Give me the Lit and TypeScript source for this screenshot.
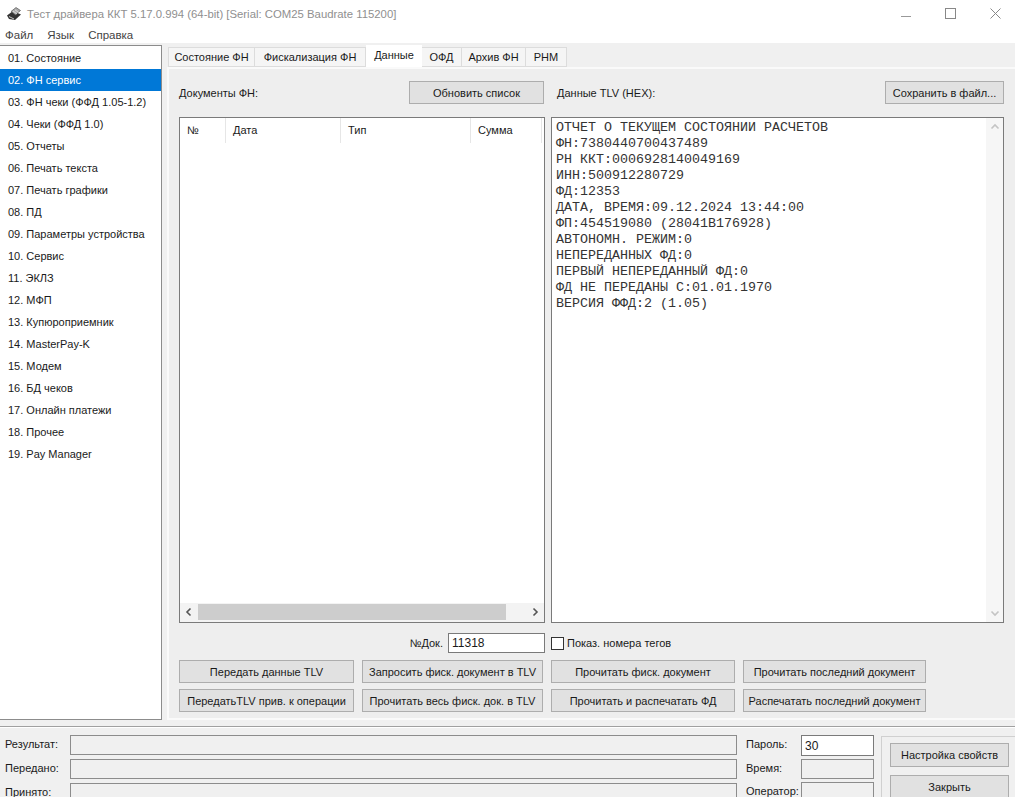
import { LitElement, html, css, svg } from 'lit';
import { customElement } from 'lit/decorators.js';

const NAV = [
  '01. Состояние', '02. ФН сервис', '03. ФН чеки (ФФД 1.05-1.2)', '04. Чеки (ФФД 1.0)', '05. Отчеты',
  '06. Печать текста', '07. Печать графики', '08. ПД', '09. Параметры устройства', '10. Сервис',
  '11. ЭКЛЗ', '12. МФП', '13. Купюроприемник', '14. MasterPay-K', '15. Модем',
  '16. БД чеков', '17. Онлайн платежи', '18. Прочее', '19. Pay Manager',
];

const TABS = ['Состояние ФН', 'Фискализация ФН', 'Данные', 'ОФД', 'Архив ФН', 'РНМ'];

const REPORT = [
  'ОТЧЕТ О ТЕКУЩЕМ СОСТОЯНИИ РАСЧЕТОВ',
  'ФН:7380440700437489',
  'РН ККТ:0006928140049169',
  'ИНН:500912280729',
  'ФД:12353',
  'ДАТА, ВРЕМЯ:09.12.2024 13:44:00',
  'ФП:454519080 (28041B176928)',
  'АВТОНОМН. РЕЖИМ:0',
  'НЕПЕРЕДАННЫХ ФД:0',
  'ПЕРВЫЙ НЕПЕРЕДАННЫЙ ФД:0',
  'ФД НЕ ПЕРЕДАНЫ С:01.01.1970',
  'ВЕРСИЯ ФФД:2 (1.05)',
];

const ACTIONS = [
  'Передать данные TLV', 'Запросить фиск. документ в TLV', 'Прочитать фиск. документ', 'Прочитать последний документ',
  'ПередатьTLV прив. к операции', 'Прочитать весь фиск. док. в TLV', 'Прочитать и распечатать ФД', 'Распечатать последний документ',
];

const chevron = (d: string, color: string) => html`
  <svg class="chev" width="10" height="10" viewBox="0 0 10 10">
    ${svg`<path d=${d} fill="none" stroke=${color} stroke-width="1.6"></path>`}
  </svg>`;

@customElement('app-root')
export class AppRoot extends LitElement {
  static styles = css`
    :host {
      display: block;
      width: 1015px;
      height: 797px;
      overflow: hidden;
      background: #f0f0f0;
      font-family: "Liberation Sans", Arial, sans-serif;
      font-size: 11px;
      color: #1a1a1a;
    }
    .titlebar {
      height: 27px;
      background: #fff;
      display: flex;
      align-items: center;
      padding-left: 6px;
      color: #8f8f8f;
      font-size: 11.35px;
    }
    .title-text { margin-left: 5px; flex: 1; }
    .winbtns { display: flex; align-items: center; padding-right: 14px; gap: 34px; }
    .menubar {
      height: 16px;
      background: #fff;
      display: flex;
      gap: 14px;
      padding-left: 5px;
      font-size: 11.5px;
      color: #444;
      align-items: center;
    }
    .middle { display: flex; height: 677px; padding-top: 2px; }
    .nav {
      width: 162px;
      height: 675px;
      box-sizing: border-box;
      background: #fff;
      border-top: 1px solid #8c8c8c;
      border-right: 1px solid #8c8c8c;
      border-bottom: 1px solid #8c8c8c;
      padding-top: 1px;
      flex: none;
    }
    .nav-item { height: 22px; line-height: 22px; padding-left: 8px; white-space: nowrap; }
    .nav-item.sel { background: #0078d7; color: #fff; }
    .content { margin-left: 5px; width: 848px; flex: none; }
    .tabs {
      display: grid;
      grid-template-columns: 87px 111px 56px 40px 64px 41px;
      justify-content: start;
      height: 22px;
      padding-left: 1px;
      align-items: end;
    }
    .tab {
      height: 20px;
      line-height: 19px;
      box-sizing: border-box;
      text-align: center;
      background: #f5f5f5;
      border: 1px solid #dcdcdc;
      border-left: none;
      white-space: nowrap;
    }
    .tab:first-child { border-left: 1px solid #dcdcdc; }
    .tab.active { height: 22px; line-height: 20px; background: #fff; border: none; }
    .panel {
      height: 653px;
      box-sizing: border-box;
      background: #eeeeee;
      border: 2px solid #fafafa;
      border-right: none;
      padding: 12px 11px 0 10px;
    }
    .columns { display: grid; grid-template-columns: 366px 453px; column-gap: 6px; }
    .head { height: 23px; display: flex; align-items: center; justify-content: space-between; margin-bottom: 13px; }
    .head-right { padding-left: 6px; }
    .btn {
      box-sizing: border-box;
      height: 23px;
      display: flex;
      align-items: center;
      justify-content: center;
      background: #e1e1e1;
      border: 1px solid #adadad;
      white-space: nowrap;
      color: #1a1a1a;
    }
    .btn-update { width: 135px; margin-right: 1px; }
    .btn-save { width: 119px; }
    .box {
      height: 506px;
      box-sizing: border-box;
      background: #fff;
      border: 1px solid #7a7a7a;
      position: relative;
    }
    .list { display: flex; flex-direction: column; }
    .list-head { display: grid; grid-template-columns: 46px 115px 130px 71px; height: 25px; }
    .list-head div { border-right: 1px solid #e6e6e6; padding: 6px 0 0 7px; font-size: 11px; line-height: 13px; }
    .list-body { flex: 1; }
    .hscroll { height: 18px; display: flex; align-items: center; background: #f3f3f3; padding-bottom: 1px; }
    .hscroll .end { width: 18px; display: flex; justify-content: center; flex: none; }
    .thumb { height: 16px; width: 308px; background: #cdcdcd; flex: none; }
    .track { flex: 1; }
    .report { display: flex; }
    .report-text {
      flex: 1;
      padding: 2px 0 0 4px;
      font-family: "Liberation Mono", "Courier New", monospace;
      font-size: 13.33px;
      line-height: 16px;
      white-space: pre;
      color: #333;
    }
    .vscroll {
      width: 17px;
      background: #f6f6f6;
      display: flex;
      flex-direction: column;
      justify-content: space-between;
      align-items: center;
      padding: 4px 0;
      box-sizing: border-box;
    }
    .docrow { display: flex; margin-top: 10px; height: 20px; align-items: center; }
    .doc-left { width: 366px; display: flex; justify-content: flex-end; align-items: center; gap: 5px; }
    .input {
      box-sizing: border-box;
      background: #fff;
      border: 1px solid #7a7a7a;
      display: flex;
      align-items: center;
      padding-left: 3px;
      font-size: 12px;
    }
    .input-doc { width: 97px; height: 20px; }
    .check { margin-left: 6px; display: flex; align-items: center; gap: 3px; }
    .checkbox { width: 13px; height: 13px; box-sizing: border-box; background: #fff; border: 1px solid #333; }
    .actions {
      display: grid;
      grid-template-columns: 175px 181px 184px 183px;
      column-gap: 8px;
      row-gap: 6px;
      margin-top: 7px;
    }
    .status {
      height: 72px;
      margin-top: 4px;
      border-top: 1px solid #a0a0a0;
      box-shadow: inset 0 1px 0 #fff;
      box-sizing: border-box;
      padding: 8px 0 0 5px;
      display: flex;
      align-items: flex-start;
    }
    .status-grid { display: grid; grid-template-columns: 65px 667px; row-gap: 4px; flex: none; }
    .status-side { display: grid; grid-template-columns: 55px 73px; row-gap: 3px; margin-left: 9px; flex: none; }
    .lbl { display: flex; align-items: center; height: 18px; padding-bottom: 2px; }
    .field { box-sizing: border-box; height: 20px; border: 1px solid #8c8c8c; background: #f0f0f0; }
    .input-pass { height: 21px; }
    .group {
      margin-left: 7px;
      margin-top: 1px;
      flex: 1;
      height: 70px;
      border-top: 1px solid #d0d0d0;
      border-left: 1px solid #d0d0d0;
      padding: 6px 6px 0 8px;
    }
    .group .btn { height: 24px; margin-bottom: 8px; }
  `;

  render() {
    return html`
      <div class="titlebar">
        <svg width="16" height="14" viewBox="0 0 16 14">
          <path d="M1 8.5 L7 4 L15 7.5 L9 13 L3 12 Z" fill="#333"></path>
          <path d="M5 4.5 L10 .5 L14.5 3.5 L9.5 8 Z" fill="#a8a8a8" stroke="#444" stroke-width=".6"></path>
          <path d="M7 4L11 7M9 2.8L12.5 5.5M3 9.5L8 12" stroke="#e8e8e8" stroke-width=".8"></path>
        </svg>
        <span class="title-text">Тест драйвера ККТ 5.17.0.994 (64-bit) [Serial: COM25 Baudrate 115200]</span>
        <div class="winbtns">
          <svg width="10" height="10" viewBox="0 0 10 10"><path d="M0 7.5H10" stroke="#999"></path></svg>
          <svg width="11" height="11" viewBox="0 0 11 11"><rect x=".5" y=".5" width="10" height="10" fill="none" stroke="#888"></rect></svg>
          <svg width="11" height="11" viewBox="0 0 11 11"><path d="M.5 .5L10.5 10.5M10.5 .5L.5 10.5" stroke="#888"></path></svg>
        </div>
      </div>
      <div class="menubar"><span>Файл</span><span>Язык</span><span>Справка</span></div>
      <div class="middle">
        <div class="nav">
          ${NAV.map((n, i) => html`<div class="nav-item ${i === 1 ? 'sel' : ''}">${n}</div>`)}
        </div>
        <div class="content">
          <div class="tabs">
            ${TABS.map((t, i) => html`<div class="tab ${i === 2 ? 'active' : ''}">${t}</div>`)}
          </div>
          <div class="panel">
            <div class="columns">
              <div class="head">
                <span>Документы ФН:</span>
                <div class="btn btn-update">Обновить список</div>
              </div>
              <div class="head head-right">
                <span>Данные TLV (HEX):</span>
                <div class="btn btn-save">Сохранить в файл...</div>
              </div>
              <div class="box list">
                <div class="list-head">
                  <div>№</div><div>Дата</div><div>Тип</div><div>Сумма</div>
                </div>
                <div class="list-body"></div>
                <div class="hscroll">
                  <div class="end">${chevron('M6.5 1.5L3 5L6.5 8.5', '#555')}</div>
                  <div class="thumb"></div>
                  <div class="track"></div>
                  <div class="end">${chevron('M3.5 1.5L7 5L3.5 8.5', '#555')}</div>
                </div>
              </div>
              <div class="box report">
                <div class="report-text">${REPORT.join('\n')}</div>
                <div class="vscroll">
                  ${chevron('M1.5 6.5L5 3L8.5 6.5', '#c4c4c4')}
                  ${chevron('M1.5 3.5L5 7L8.5 3.5', '#c4c4c4')}
                </div>
              </div>
            </div>
            <div class="docrow">
              <div class="doc-left">
                <span>№Док.</span>
                <div class="input input-doc">11318</div>
              </div>
              <div class="check"><div class="checkbox"></div><span>Показ. номера тегов</span></div>
            </div>
            <div class="actions">
              ${ACTIONS.map(a => html`<div class="btn">${a}</div>`)}
            </div>
          </div>
        </div>
      </div>
      <div class="status">
        <div class="status-grid">
          <div class="lbl">Результат:</div><div class="field"></div>
          <div class="lbl">Передано:</div><div class="field"></div>
          <div class="lbl">Принято:</div><div class="field"></div>
        </div>
        <div class="status-side">
          <div class="lbl">Пароль:</div><div class="input input-pass">30</div>
          <div class="lbl">Время:</div><div class="field"></div>
          <div class="lbl">Оператор:</div><div class="field"></div>
        </div>
        <div class="group">
          <div class="btn">Настройка свойств</div>
          <div class="btn">Закрыть</div>
        </div>
      </div>
    `;
  }
}
